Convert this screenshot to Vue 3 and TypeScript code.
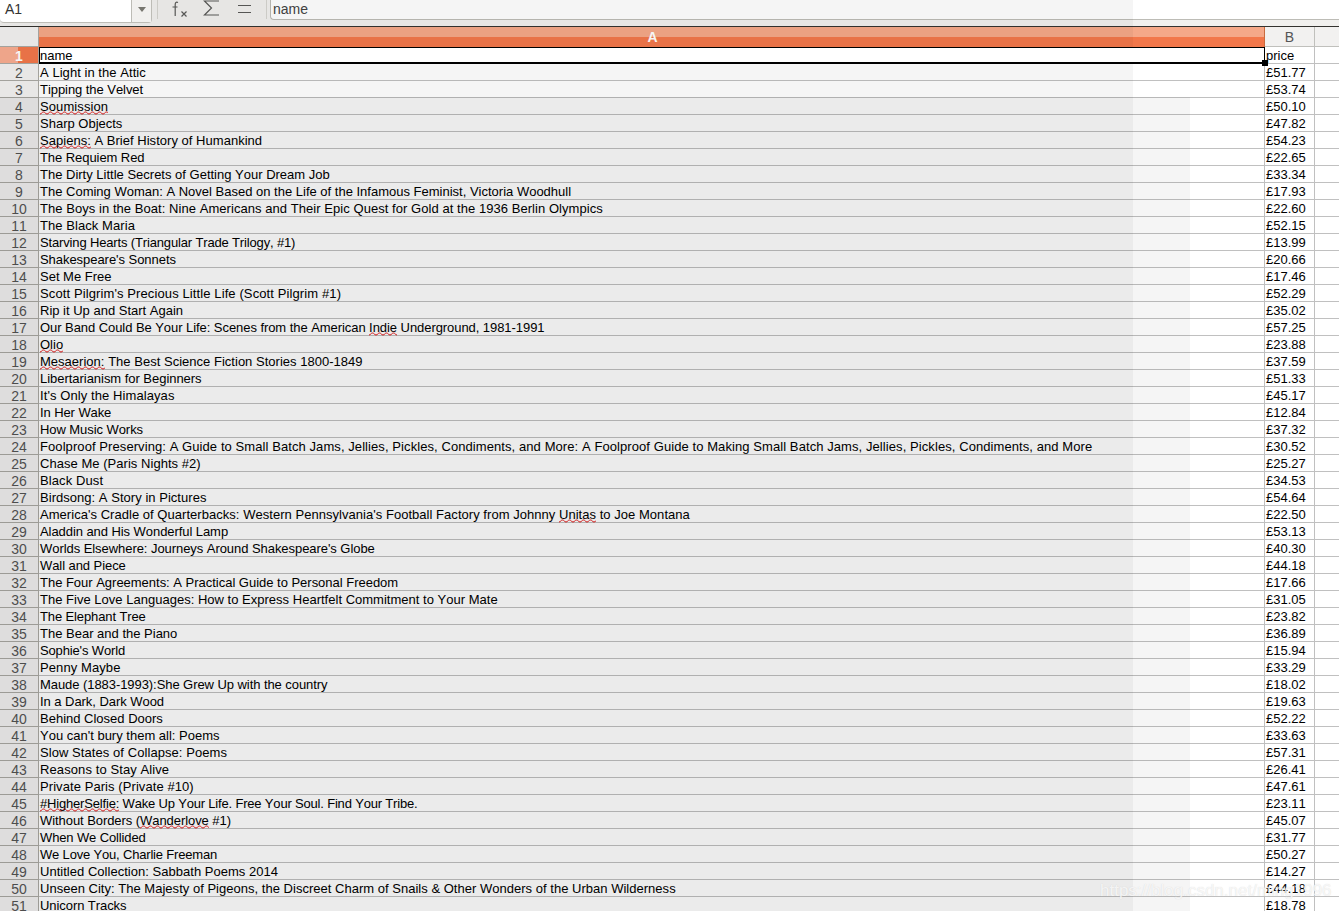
<script setup lang="ts">
interface Part { text: string; wavy: boolean }
const raw: [string, string, number][] = [
  ['A Light in the Attic', '£51.77', 1],
  ['Tipping the Velvet', '£53.74', -1],
  ['~Soumission~', '£50.10', 1],
  ['Sharp Objects', '£47.82', 0],
  ['~Sapiens:~ A Brief History of Humankind', '£54.23', 1],
  ['The Requiem Red', '£22.65', -1],
  ['The Dirty Little Secrets of Getting Your Dream Job', '£33.34', 0],
  ['The Coming Woman: A Novel Based on the Life of the Infamous Feminist, Victoria Woodhull', '£17.93', 0],
  ['The Boys in the Boat: Nine Americans and Their Epic Quest for Gold at the 1936 Berlin Olympics', '£22.60', 5],
  ['The Black Maria', '£52.15', 1],
  ['Starving Hearts (Triangular Trade Trilogy, #1)', '£13.99', -7],
  ["Shakespeare's Sonnets", '£20.66', -1],
  ['Set Me Free', '£17.46', 0],
  ["Scott Pilgrim's Precious Little Life (Scott Pilgrim #1)", '£52.29', 6],
  ['Rip it Up and Start Again', '£35.02', 0],
  ['Our Band Could Be Your Life: Scenes from the American ~Indie~ Underground, 1981-1991', '£57.25', -5],
  ['~Olio~', '£23.88', 0],
  ['~Mesaerion:~ The Best Science Fiction Stories 1800-1849', '£37.59', 1],
  ['Libertarianism for Beginners', '£51.33', -1],
  ["It's Only the Himalayas", '£45.17', 2],
  ['In Her Wake', '£12.84', -1],
  ['How Music Works', '£37.32', -1],
  ['Foolproof Preserving: A Guide to Small Batch Jams, Jellies, Pickles, Condiments, and More: A Foolproof Guide to Making Small Batch Jams, Jellies, Pickles, Condiments, and More', '£30.52', 14],
  ['Chase Me (Paris Nights #2)', '£25.27', 1],
  ['Black Dust', '£34.53', 1],
  ['Birdsong: A Story in Pictures', '£54.64', 1],
  ["America's Cradle of Quarterbacks: Western Pennsylvania's Football Factory from Johnny ~Unitas~ to Joe Montana", '£22.50', 4],
  ['Aladdin and His Wonderful Lamp', '£53.13', -2],
  ["Worlds Elsewhere: Journeys Around Shakespeare's Globe", '£40.30', -3],
  ['Wall and Piece', '£44.18', -1],
  ['The Four Agreements: A Practical Guide to Personal Freedom', '£17.66', -1],
  ['The Five Love Languages: How to Express Heartfelt Commitment to Your Mate', '£31.05', 1],
  ['The Elephant Tree', '£23.82', -2],
  ['The Bear and the Piano', '£36.89', 0],
  ["Sophie's World", '£15.94', -2],
  ['Penny Maybe', '£33.29', 1],
  ['Maude (1883-1993):She Grew Up with the country', '£18.02', -3],
  ['In a Dark, Dark Wood', '£19.63', -1],
  ['Behind Closed Doors', '£52.22', 0],
  ["You can't bury them all: Poems", '£33.63', 0],
  ['Slow States of Collapse: Poems', '£57.31', 2],
  ['Reasons to Stay Alive', '£26.41', 2],
  ['Private Paris (Private #10)', '£47.61', 2],
  ['~#HigherSelfie:~ Wake Up Your Life. Free Your Soul. Find Your Tribe.', '£23.11', -12],
  ['Without Borders (~Wanderlove~ #1)', '£45.07', -2],
  ['When We Collided', '£31.77', -2],
  ['We Love You, Charlie Freeman', '£50.27', -5],
  ['Untitled Collection: Sabbath Poems 2014', '£14.27', 1],
  ['Unseen City: The Majesty of Pigeons, the Discreet Charm of Snails & Other Wonders of the Urban Wilderness', '£44.18', 2],
  ['Unicorn Tracks', '£18.78', -1],
]
const rows = raw.map(([title, price, dx], i) => {
  const plain = title.split('~').join('')
  return {
    num: i + 2,
    price,
    fit: `${(dx / plain.length).toFixed(3)}px`,
    parts: title.split('~').map((text, j): Part => ({ text, wavy: j % 2 === 1 })),
  }
})
</script>

<template>
  <div class="screen">
    <div class="formula-bar">
      <div class="name-box">
        <span class="name-value">A1</span>
        <span class="name-drop"><i class="caret"></i></span>
      </div>
      <div class="sep"></div>
      <div class="tools">
        <svg class="tool" width="22" height="20" viewBox="0 0 22 20">
          <path d="M9 2.5C7.2 1.6 6.2 2.6 6.2 4.5V16M3.5 7H8.5" fill="none" stroke="#5a5a58" stroke-width="1.2" />
          <path d="M12.5 11.5l5 5M17.5 11.5l-5 5" fill="none" stroke="#5a5a58" stroke-width="1.2" />
        </svg>
        <svg class="tool" width="22" height="20" viewBox="0 0 22 20">
          <path d="M18 1H3.5L10.5 8L3.5 15H18" fill="none" stroke="#5a5a58" stroke-width="1.2" />
        </svg>
        <svg class="tool" width="22" height="20" viewBox="0 0 22 20">
          <path d="M5 5.5H18M5 12.5H18" fill="none" stroke="#5a5a58" stroke-width="1.2" />
        </svg>
      </div>
      <div class="sep sep-b"></div>
      <div class="formula-input">name</div>
    </div>
    <div class="gap"></div>

    <div class="sheet">
      <div class="row col-head">
        <div class="corner"></div>
        <div class="col-a">A</div>
        <div class="col-b">B</div>
        <div class="col-c"></div>
      </div>
      <div class="row">
        <div class="num num-active"><span>1</span></div>
        <div class="cell cell-a cell-selected">name<i class="handle"></i></div>
        <div class="cell cell-b">price</div>
        <div class="cell cell-c"></div>
      </div>
      <div v-for="r in rows" :key="r.num" class="row">
        <div class="num">{{ r.num }}</div>
        <div class="cell cell-a" :style="{ letterSpacing: r.fit }">
          <template v-for="(p, i) in r.parts" :key="i">
            <span v-if="p.wavy" class="wavy">{{ p.text }}</span>
            <template v-else>{{ p.text }}</template>
          </template>
        </div>
        <div class="cell cell-b">{{ r.price }}</div>
        <div class="cell cell-c"></div>
      </div>
    </div>

    <div class="shade shade-top"></div>
    <div class="shade shade-wide"></div>
    <div class="watermark">https://blog.csdn.net/ming1996</div>
  </div>
</template>

<style>
html, body { margin: 0; padding: 0; overflow: hidden; background: #fff; }
</style>

<style scoped>
.screen {
  position: relative;
  width: 1339px;
  height: 911px;
  overflow: hidden;
  background: #fff;
  font-family: "Liberation Sans", Arial, sans-serif;
  font-size: 13px;
  font-kerning: none;
  color: #000;
}
.formula-bar {
  display: flex;
  align-items: flex-start;
  height: 19px;
  background: #f1f0ee;
}
.name-box {
  display: flex;
  width: 152px;
  height: 23px;
  box-sizing: border-box;
  border: 1px solid #bdbcb6;
  border-top: 0;
  border-left: 0;
  border-radius: 0 0 4px 4px;
  background: #fff;
  flex: none;
  position: relative;
  z-index: 1;
}
.name-value {
  flex: 1;
  padding: 0 0 0 5px;
  line-height: 18px;
  font-size: 14px;
  color: #333;
}
.name-drop {
  width: 20px;
  border-left: 1px solid #bdbcb6;
  background: #f1f0ee;
  display: flex;
  justify-content: center;
  padding-top: 7px;
  box-sizing: border-box;
}
.caret {
  width: 0;
  height: 0;
  border-left: 4px solid transparent;
  border-right: 4px solid transparent;
  border-top: 5px solid #77766f;
}
.sep {
  width: 1px;
  height: 19px;
  margin-left: 5px;
  background: #d5d4cf;
  flex: none;
}
.tools {
  display: flex;
  gap: 10px;
  padding-left: 11px;
  width: 102px;
  box-sizing: border-box;
  flex: none;
}
.tool { flex: none; }
.sep-b { margin-left: 6px; }
.formula-input {
  flex: none;
  width: 1069px;
  height: 20px;
  box-sizing: border-box;
  margin-left: 3px;
  padding-left: 2px;
  border: 1px solid #bdbcb6;
  border-top: 0;
  border-right: 0;
  border-radius: 0 0 0 4px;
  font-size: 14px;
  line-height: 18px;
  color: #444;
  background: #fff;
}
.gap {
  height: 7px;
  background: #f1f0ee;
  border-bottom: 1px solid #33322f;
}
.sheet {
  display: flex;
  flex-direction: column;
}
.row {
  display: grid;
  grid-template-columns: 39px 1226px 50px 24px;
  grid-template-rows: 17px;
  height: 17px;
}
.col-head {
  height: 20px;
  grid-template-rows: 20px;
}
.corner {
  background: #f2f1f0;
  border-right: 1px solid #aaa9a4;
  border-bottom: 1px solid #aaa9a4;
  box-sizing: border-box;
}
.col-a {
  background: linear-gradient(#f5a888 0, #f5a888 10px, #f2774a 10px, #f2774a 100%);
  color: #fff;
  font-weight: 700;
  font-size: 14px;
  text-align: center;
  line-height: 20px;
  padding-left: 2px;
  border-right: 1px solid #c96a3e;
  box-sizing: border-box;
}
.col-b, .col-c {
  background: #f2f1f0;
  color: #555;
  font-size: 14px;
  text-align: center;
  line-height: 20px;
  border-right: 1px solid #c0c0bc;
  border-bottom: 1px solid #c0c0bc;
  box-sizing: border-box;
}
.col-c { border-right: 0; }
.num {
  background: #f2f1f0;
  color: #555;
  font-size: 14px;
  line-height: 18px;
  text-align: center;
  border-right: 1px solid #aaa9a4;
  border-bottom: 1px solid #aaa9a4;
  box-sizing: border-box;
}
.num-active {
  background: linear-gradient(90deg, #f8ac90 0, #f8ac90 18px, #f2774a 18px, #f2774a 100%);
  color: #fff;
  font-weight: 700;
}
.cell {
  box-sizing: border-box;
  height: 17px;
  border-right: 1px solid #c0c0c0;
  border-bottom: 1px solid #c0c0c0;
  line-height: 18px;
  padding-left: 1px;
  white-space: pre;
  background: #fff;
}
.cell-c { border-right: 0; }
.cell-selected {
  position: relative;
  border: 2px solid #000;
  border-top-width: 1px;
  border-right-width: 1px;
  border-left-width: 1px;
  padding-left: 0;
  line-height: 15px;
  z-index: 1;
}
.handle {
  position: absolute;
  right: -4px;
  bottom: -4px;
  width: 6px;
  height: 6px;
  background: #000;
}
.wavy {
  padding-bottom: 1px;
  background-image: url("data:image/svg+xml,%3Csvg xmlns='http://www.w3.org/2000/svg' width='7' height='4'%3E%3Cpath d='M0 3C1.7 3 1.8 1 3.5 1S5.3 3 7 3' fill='none' stroke='%23e01010' stroke-width='1'/%3E%3C/svg%3E");
  background-repeat: repeat-x;
  background-position: left bottom;
  background-size: 7px 4px;
}
.shade {
  position: absolute;
  left: 0;
  pointer-events: none;
  background: rgba(0, 0, 0, 0.04);
}
.shade-top {
  top: 0;
  bottom: 0;
  width: 1133px;
}
.shade-wide {
  top: 97px;
  bottom: 0;
  width: 1190px;
}
.watermark {
  position: absolute;
  left: 1100px;
  top: 881px;
  font-size: 17px;
  line-height: 20px;
  color: rgba(255, 255, 255, 0.75);
  text-shadow: 0 0 1px rgba(190, 190, 190, 0.6);
  white-space: nowrap;
  pointer-events: none;
}
</style>
